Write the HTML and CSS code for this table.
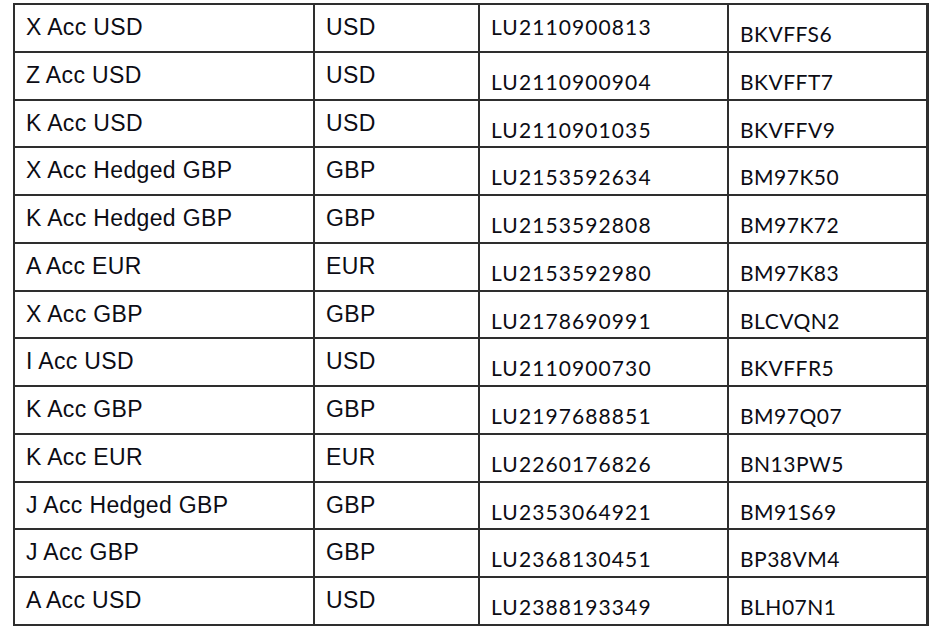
FILE: index.html
```html
<!DOCTYPE html>
<html lang="en">
<head>
<meta charset="utf-8">
<title>Share classes</title>
<link rel="stylesheet" href="styles.css">
</head>
<body>
<div class="grid" role="table">
  <div class="c name">X Acc USD</div><div class="c cur">USD</div><div class="c isin first">LU2110900813</div><div class="c sedol">BKVFFS6</div>
  <div class="c name">Z Acc USD</div><div class="c cur">USD</div><div class="c isin">LU2110900904</div><div class="c sedol">BKVFFT7</div>
  <div class="c name">K Acc USD</div><div class="c cur">USD</div><div class="c isin">LU2110901035</div><div class="c sedol">BKVFFV9</div>
  <div class="c name">X Acc Hedged GBP</div><div class="c cur">GBP</div><div class="c isin">LU2153592634</div><div class="c sedol">BM97K50</div>
  <div class="c name">K Acc Hedged GBP</div><div class="c cur">GBP</div><div class="c isin">LU2153592808</div><div class="c sedol">BM97K72</div>
  <div class="c name">A Acc EUR</div><div class="c cur">EUR</div><div class="c isin">LU2153592980</div><div class="c sedol">BM97K83</div>
  <div class="c name">X Acc GBP</div><div class="c cur">GBP</div><div class="c isin">LU2178690991</div><div class="c sedol">BLCVQN2</div>
  <div class="c name">I Acc USD</div><div class="c cur">USD</div><div class="c isin">LU2110900730</div><div class="c sedol">BKVFFR5</div>
  <div class="c name">K Acc GBP</div><div class="c cur">GBP</div><div class="c isin">LU2197688851</div><div class="c sedol">BM97Q07</div>
  <div class="c name">K Acc EUR</div><div class="c cur">EUR</div><div class="c isin">LU2260176826</div><div class="c sedol">BN13PW5</div>
  <div class="c name">J Acc Hedged GBP</div><div class="c cur">GBP</div><div class="c isin">LU2353064921</div><div class="c sedol">BM91S69</div>
  <div class="c name">J Acc GBP</div><div class="c cur">GBP</div><div class="c isin">LU2368130451</div><div class="c sedol">BP38VM4</div>
  <div class="c name">A Acc USD</div><div class="c cur">USD</div><div class="c isin">LU2388193349</div><div class="c sedol">BLH07N1</div>
</div>
</body>
</html>
```
FILE: styles.css
```css
html, body {
  margin: 0;
  padding: 0;
  background: #ffffff;
}

body {
  padding: 3px 0 0 13px;
}

.grid {
  display: grid;
  grid-template-columns: 300px 165px 249px 200px;
  grid-auto-rows: 47.77px;
  width: max-content;
  border-left: 2px solid #2e2e2e;
  border-top: 2px solid #2e2e2e;
}

.c {
  box-sizing: border-box;
  border-right: 2px solid #2e2e2e;
  border-bottom: 2px solid #2e2e2e;
  padding-left: 11px;
  color: #0c0c14;
  white-space: nowrap;
}

.name, .cur {
  font-family: "Liberation Sans", Arial, sans-serif;
  font-size: 23px;
  line-height: 26px;
  letter-spacing: 0.35px;
  padding-top: 9px;
}

.isin, .sedol {
  font-family: Lato, "Open Sans", sans-serif;
  font-size: 21px;
  line-height: 24px;
  padding-top: 17px;
}

.isin {
  letter-spacing: 1.1px;
}

.sedol {
  letter-spacing: 0.5px;
  border-right-width: 3px;
}

.isin.first {
  padding-top: 10px;
}
```
